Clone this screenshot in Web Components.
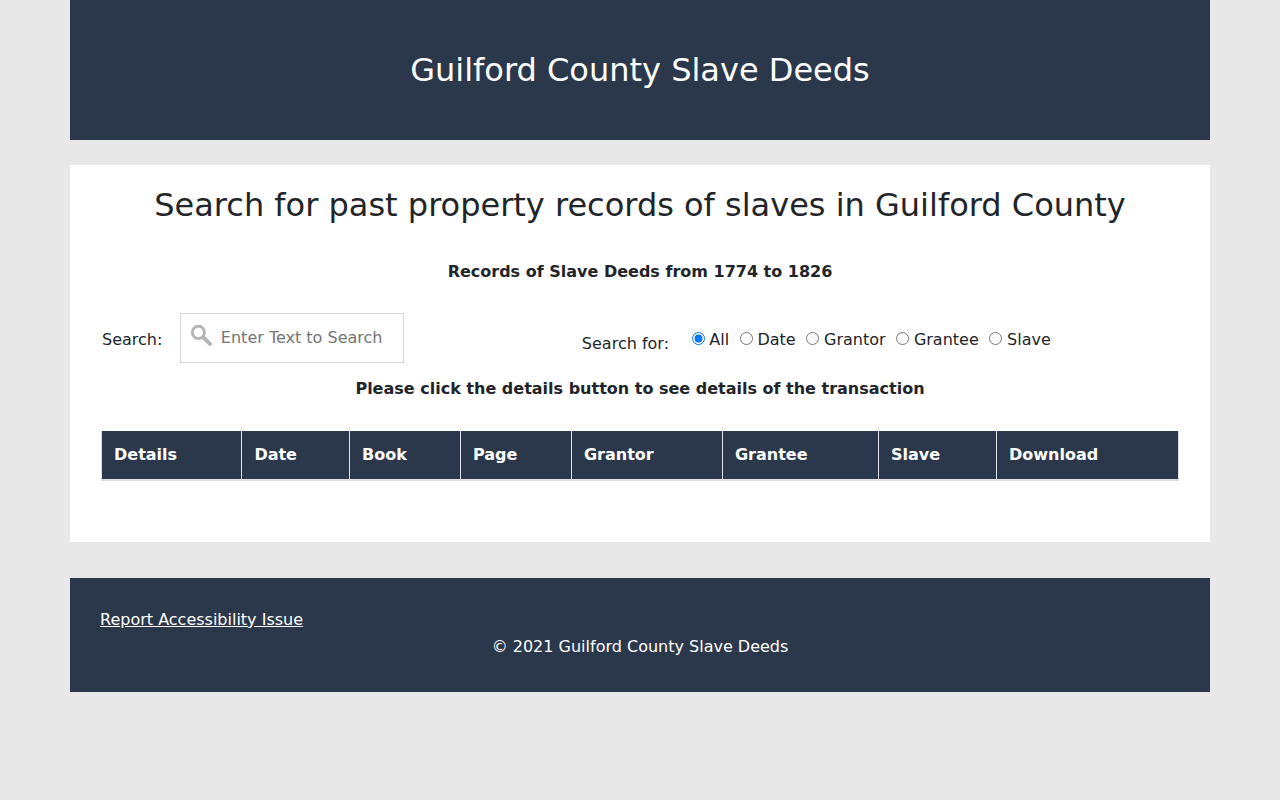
<!DOCTYPE html>
<html lang="en">
<head>
<meta charset="utf-8">
<title>Guilford County Slave Deeds</title>
<style>
    html, body { margin: 0; padding: 0; }
    body {
        background: #e8e8e8; color: #212529;
        font: 16px/1.5 "DejaVu Sans", sans-serif;
    }
</style>
</head>
<body>
<deeds-page>
    <site-header>Guilford County Slave Deeds</site-header>
    <search-panel>
        <span slot="title">Search for past property records of slaves in Guilford County</span>
        <span slot="subtitle">Records of Slave Deeds from 1774 to 1826</span>
        <span slot="hint">Please click the details button to see details of the transaction</span>
        <deeds-table slot="table"></deeds-table>
    </search-panel>
    <site-footer></site-footer>
</deeds-page>

<script>
class DeedsPage extends HTMLElement {
    constructor() {
        super();
        this.attachShadow({mode: 'open'}).innerHTML = `
            <style>
                :host { display: block; width: 1140px; margin: 0 auto; }
            </style>
            <slot></slot>
        `;
    }
}

class SiteHeader extends HTMLElement {
    constructor() {
        super();
        this.attachShadow({mode: 'open'}).innerHTML = `
            <style>
                :host {
                    display: flex; height: 140px; align-items: center; justify-content: center;
                    background: #2b384b; color: #fff;
                    font-size: 32px; line-height: 48px;
                }
            </style>
            <slot></slot>
        `;
    }
}

class SearchPanel extends HTMLElement {
    constructor() {
        super();
        this.attachShadow({mode: 'open'}).innerHTML = `
            <style>
                :host {
                    display: block; box-sizing: border-box; height: 377px; margin-top: 25px;
                    padding: 16px 31px 0; background: #fff; text-align: center;
                }
                .title { font-size: 32px; line-height: 48px; }
                .subtitle, .hint { font-weight: bold; }
                .subtitle { margin-top: 31px; }
                .row { display: flex; margin-top: 29px; height: 50px; text-align: left; }
                .hint { margin-top: 14px; }
                .table { margin-top: 30px; text-align: left; }
                .label { margin: 15px 18px 0 1px; }
                .box {
                    box-sizing: border-box; width: 224px; height: 50px; display: flex; align-items: center;
                    gap: 8.5px; padding: 0 9px; border: 1px solid #d8d8d8; color: #757575;
                }
                .box svg { margin-top: -7px; flex: none; }
                .for { display: flex; margin-left: 177.5px; padding-top: 19px; }
                .for .name { margin-right: 22.5px; }
                label { display: flex; align-items: center; height: 24px; margin: -4px 10.5px 0 0; }
                input { width: 13px; height: 13px; margin: -4px 4.8px 0 0; flex: none; }
            </style>
            <div class="title"><slot name="title"></slot></div>
            <div class="subtitle"><slot name="subtitle"></slot></div>
            <div class="row">
                <div class="label">Search:</div>
                <div class="box">
                    <svg width="22" height="22" viewBox="0 0 21 21" fill="none" stroke="#b5b5b5">
                        <circle cx="8" cy="8" r="5.8" stroke-width="2.8"/>
                        <path d="M12.5 12.5 19 19" stroke-width="3.8" stroke-linecap="round"/>
                    </svg>
                    <span>Enter Text to Search</span>
                </div>
                <div class="for">
                    <div class="name">Search for:</div>
                    <label><input type="radio" name="field" checked>All</label>
                    <label><input type="radio" name="field">Date</label>
                    <label><input type="radio" name="field">Grantor</label>
                    <label><input type="radio" name="field">Grantee</label>
                    <label><input type="radio" name="field">Slave</label>
                </div>
            </div>
            <div class="hint"><slot name="hint"></slot></div>
            <div class="table"><slot name="table"></slot></div>
        `;
    }
}

class DeedsTable extends HTMLElement {
    constructor() {
        super();
        const columns = [
            ['Details', 140.4], ['Date', 107.6], ['Book', 111], ['Page', 111],
            ['Grantor', 151], ['Grantee', 156], ['Slave', 118], ['Download', 183],
        ];
        const cells = columns.map(([name, width]) => `<div class="cell" style="width:${width}px">${name}</div>`).join('');
        this.attachShadow({mode: 'open'}).innerHTML = `
            <style>
                :host { display: block; }
                .head {
                    display: flex; width: 1078px; height: 50px; box-sizing: border-box;
                    background: #2b384b; color: #fff; font-weight: bold;
                    border-bottom: 2px solid #dee2e6;
                }
                .cell {
                    box-sizing: border-box; padding: 12px 0 0 12px;
                    border-left: 1px solid #dee2e6;
                }
                .cell:last-child { border-right: 1px solid #dee2e6; }
            </style>
            <div class="head">${cells}</div>
        `;
    }
}

class SiteFooter extends HTMLElement {
    constructor() {
        super();
        this.attachShadow({mode: 'open'}).innerHTML = `
            <style>
                :host {
                    display: block; box-sizing: border-box; height: 114px; margin-top: 36px;
                    padding: 30px 30px 0; background: #2b384b; color: #fff;
                }
                a { color: #fff; text-decoration: underline; }
                .copy { margin-top: 3px; text-align: center; }
            </style>
            <a href="#">Report Accessibility Issue</a>
            <div class="copy">© 2021 Guilford County Slave Deeds</div>
        `;
    }
}

customElements.define('deeds-page', DeedsPage);
customElements.define('site-header', SiteHeader);
customElements.define('search-panel', SearchPanel);
customElements.define('deeds-table', DeedsTable);
customElements.define('site-footer', SiteFooter);
</script>
</body>
</html>
